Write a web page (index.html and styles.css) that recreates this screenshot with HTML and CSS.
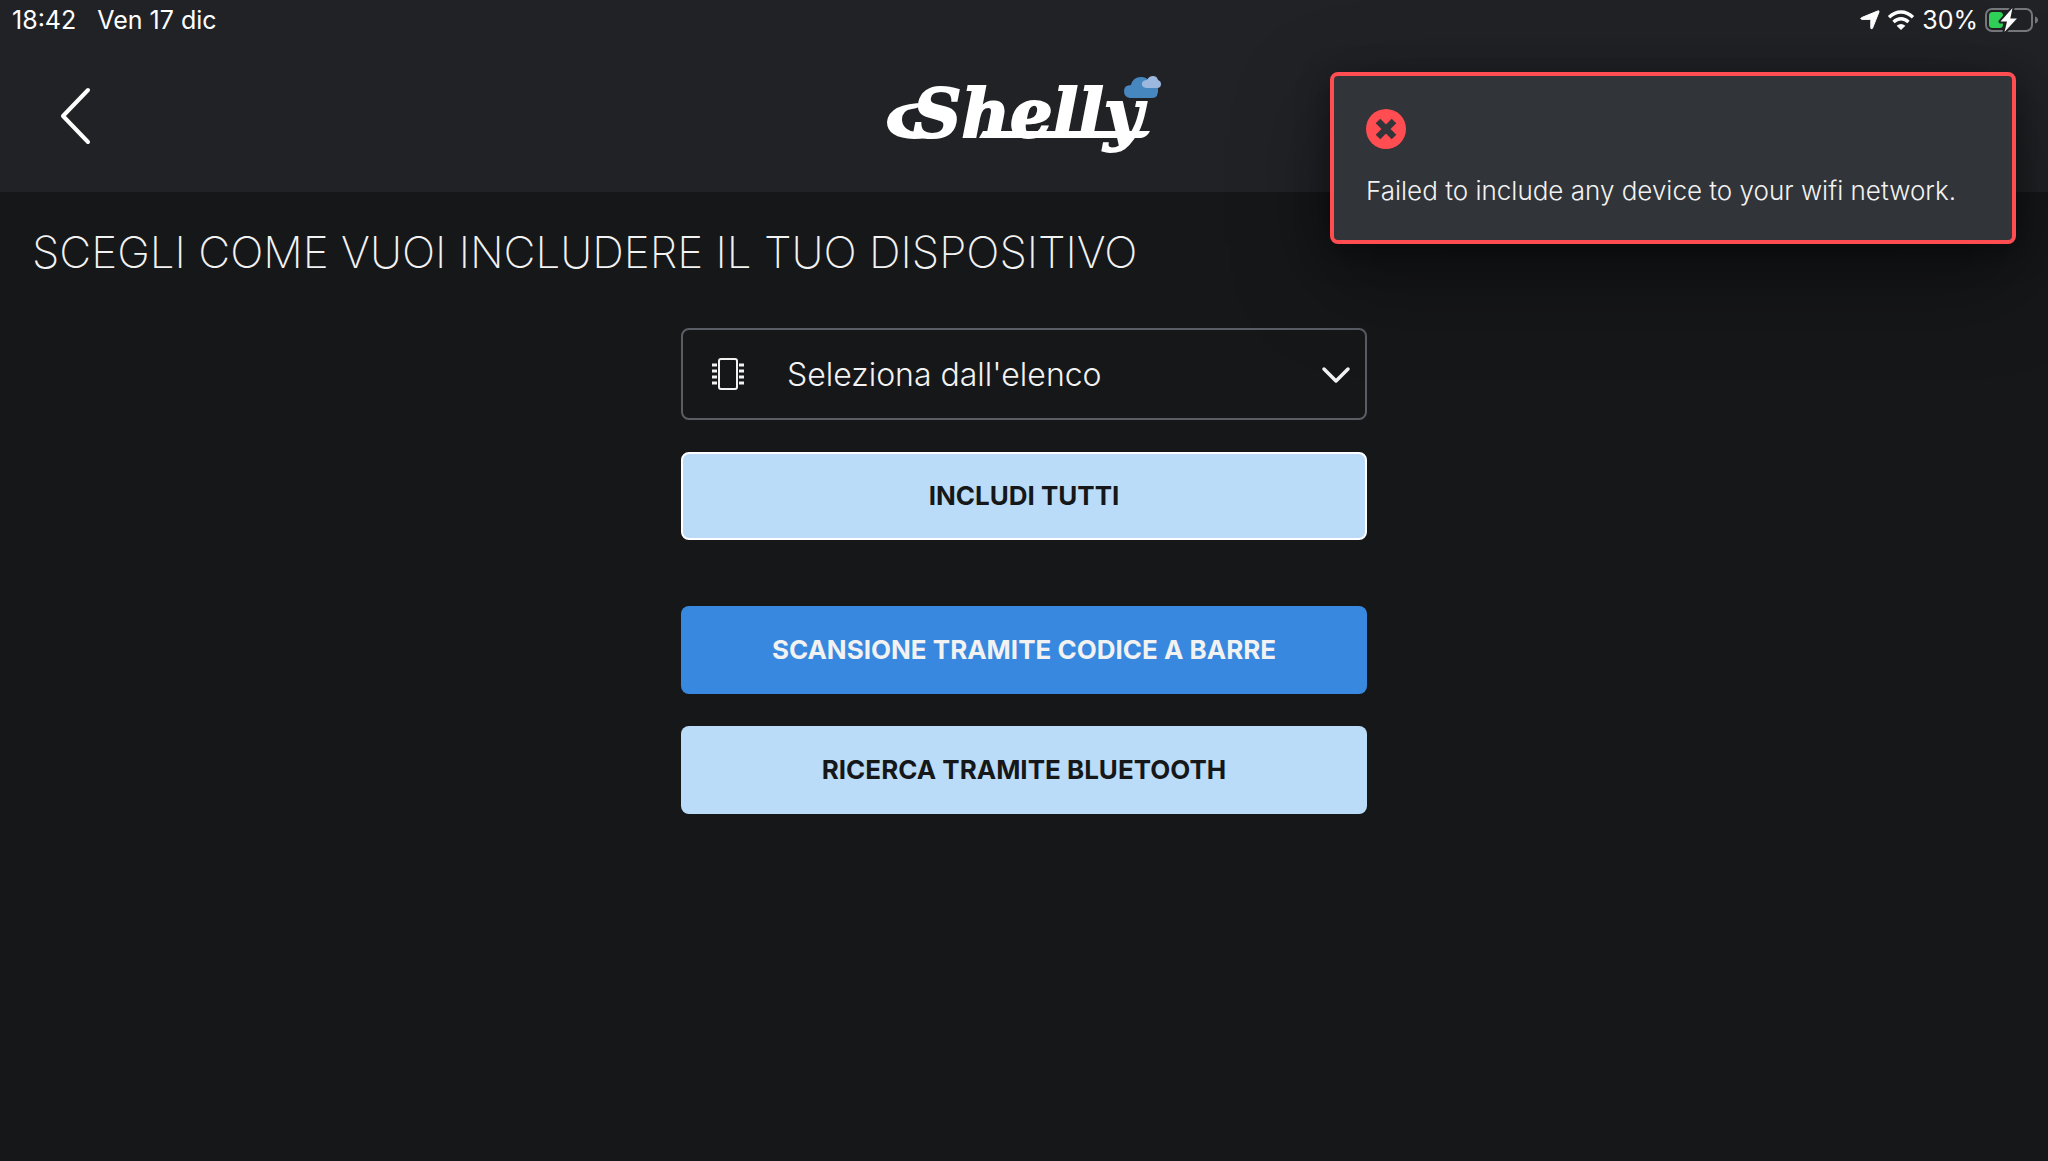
FILE: index.html
```html
<!DOCTYPE html>
<html lang="it">
<head>
  <meta charset="UTF-8" />
  <meta name="viewport" content="width=device-width, initial-scale=1.0"/>
  <title>Shelly Cloud</title>
  <link rel="stylesheet" href="styles.css">
</head>
<body>
  <header class="header">
    <div class="status-bar">
      <div class="status-group">
        <span>18:42</span>
        <span>Ven 17 dic</span>
      </div>
      <div class="status-icons">
        <svg width="20" height="20" viewBox="0 0 20 20" fill="#fff" aria-hidden="true">
          <path d="M17.6 1Q19.6 .2 18.9 2.2L12.6 18Q11.4 20.2 10.8 18V10.4Q10.8 9.4 9.8 9.4H2Q-.4 8.7 1.6 7.6Z" stroke="#fff" stroke-width="1"/>
        </svg>
        <svg width="28" height="22" viewBox="0 0 28 22" aria-hidden="true">
          <path d="M2 8.2Q7.5 3 14 3T26 8.2M6.5 13Q10 9.8 14 9.8T21.5 13" fill="none" stroke="#fff" stroke-width="3.4"/>
          <path d="M9.6 16.7Q14 13.2 18.4 16.7L14 21Z" fill="#fff"/>
        </svg>
        <span>30%</span>
        <svg width="54" height="26" viewBox="0 0 54 26" aria-hidden="true">
          <rect x="1" y="2" width="46" height="22" rx="6" fill="none" stroke="#77787b" stroke-width="2"/>
          <path d="M50 9.5Q53 10.5 53 13T50 16.5Z" fill="#77787b"/>
          <rect x="4" y="5" width="14" height="16" rx="3.5" fill="#30d158"/>
          <path d="M27.5 1L15.5 14.5H22L19.5 25L32 11.5H25.3Z" fill="#fff" stroke="#212226" stroke-width="4" paint-order="stroke" stroke-linejoin="round"/>
        </svg>
      </div>
    </div>
    <nav class="nav">
      <button class="back" aria-label="Indietro">
        <svg width="32" height="60" viewBox="0 0 32 60" aria-hidden="true">
          <path d="M29 4L4 30L29 56" fill="none" stroke="#fff" stroke-width="4" stroke-linecap="round" stroke-linejoin="round"/>
        </svg>
      </button>
      <svg class="logo" width="274" height="80" viewBox="0 0 274 80" role="img" aria-label="Shelly">
        <text class="wordmark" x="26" y="61">Shelly</text>
        <!-- swash and underline -->
        <path d="M38 27Q33 32 25 33Q15 34 15 44Q16 55 30 56L48 59Q40 63 27 63Q0 62 0 46Q2 27 38 27Z" fill="#fff"/>
        <path d="M96 55H263Q260 61 254 62H92Z" fill="#fff"/>
        <path d="M243 22Q237 21 237 15Q237 9 244 9Q246 1 254 1Q260 1 263 6L271 12Q272 22 265 22Z" fill="#4687c0"/>
        <path d="M259 12Q254 11 255 7Q256 4 260 4Q262 0 266 0Q270 0 271 4Q274 5 274 8Q274 12 270 12Z" fill="#9db8df"/>
      </svg>
    </nav>
  </header>

  <div class="toast" role="alert">
    <svg width="40" height="40" viewBox="0 0 40 40" aria-hidden="true">
      <circle cx="20" cy="20" r="20" fill="#ff4d52"/>
      <path d="M12 12L28 28M28 12L12 28" stroke="#313439" stroke-width="6.5"/>
    </svg>
    <p>Failed to include any device to your wifi network.</p>
  </div>

  <main class="main">
    <h1>SCEGLI COME VUOI INCLUDERE IL TUO DISPOSITIVO</h1>
    <div class="options">
      <div class="group">
        <div class="select-box">
          <label for="device" class="chip" aria-label="Dispositivo">
            <svg width="32" height="34" viewBox="0 0 32 34" fill="none" stroke="#f2f2f2" aria-hidden="true">
              <rect x="7" y="2" width="18" height="30" rx="2" stroke-width="2"/>
              <path d="M0 8H5M0 14H5M0 20H5M0 26H5M27 8H32M27 14H32M27 20H32M27 26H32" stroke-width="3"/>
            </svg>
          </label>
          <select id="device">
            <option>Seleziona dall'elenco</option>
          </select>
          <svg class="arrow" width="30" height="20" viewBox="0 0 30 20" aria-hidden="true">
            <path d="M3 5L15 17L27 5" fill="none" stroke="#f2f2f2" stroke-width="3.5" stroke-linecap="round" stroke-linejoin="round"/>
          </svg>
        </div>
        <button class="btn btn-light btn-outline">INCLUDI TUTTI</button>
      </div>
      <div class="group">
        <button class="btn btn-blue">SCANSIONE TRAMITE CODICE A BARRE</button>
        <button class="btn btn-light">RICERCA TRAMITE BLUETOOTH</button>
      </div>
    </div>
  </main>
</body>
</html>
```

FILE: styles.css
```css
* {
  box-sizing: border-box;
}

body {
  margin: 0;
  min-height: 100vh;
  background: #161719;
  color: #f2f2f2;
  font-family: Inter, sans-serif;
}

svg {
  display: block;
}

.header {
  background: #212226;
}

.status-bar {
  display: flex;
  justify-content: space-between;
  align-items: center;
  height: 40px;
  padding: 0 9px 0 12px;
  color: #fff;
  font-size: 25px;
  font-weight: 400;
}

.status-group {
  display: flex;
  gap: 21px;
}

.status-icons {
  display: flex;
  align-items: center;
  gap: 7px;
}

.nav {
  display: grid;
  grid-template-columns: 1fr auto 1fr;
  align-items: center;
  height: 152px;
  padding: 0 32px;
}

.back {
  justify-self: start;
  padding: 16px 27px;
  border: none;
  background: none;
  cursor: pointer;
}

.logo {
  overflow: visible;
}

.wordmark {
  font-family: "DejaVu Serif", serif;
  font-size: 67px;
  font-weight: bold;
  font-style: italic;
  fill: #fff;
  stroke: #fff;
  stroke-width: 2px;
}

.toast {
  position: absolute;
  top: 72px;
  right: 32px;
  width: 686px;
  max-width: calc(100% - 64px);
  padding: 33px 32px;
  border: 4px solid #ff4d52;
  border-radius: 8px;
  background: #313439;
  box-shadow: 0 32px 96px rgba(0, 0, 0, 0.4), 0 8px 32px rgba(0, 0, 0, 0.4);
}

.toast p {
  margin: 25px 0 0;
  font-size: 26px;
  font-weight: 300;
  line-height: 33px;
}

.main {
  padding: 32px;
}

h1 {
  margin: 0 0 48px;
  font-size: 44px;
  font-weight: 200;
  line-height: 56px;
}

.options {
  display: flex;
  flex-direction: column;
  gap: 66px;
  max-width: 686px;
  margin: 0 auto;
}

.group {
  display: flex;
  flex-direction: column;
  gap: 32px;
}

.select-box {
  display: grid;
  grid-template-columns: 90px 1fr 58px;
  align-items: center;
  border: 2px solid #5a5d64;
  border-radius: 8px;
}

.chip {
  grid-area: 1 / 1;
  justify-self: center;
}

.arrow {
  grid-area: 1 / 3;
  justify-self: center;
  pointer-events: none;
}

/* the select fills the whole box, icons sit in its padding */
.select-box select {
  grid-area: 1 / 1 / 2 / 4;
  appearance: none;
  width: 100%;
  height: 88px;
  padding: 0 60px 0 104px;
  border: none;
  background: none;
  color: #f2f2f2;
  font-family: inherit;
  font-size: 32px;
  font-weight: 300;
}

.btn {
  height: 88px;
  padding: 0 16px 2px;
  border: none;
  border-radius: 8px;
  font-family: inherit;
  font-size: 26px;
  font-weight: 700;
  cursor: pointer;
}

.btn-light {
  background: #badcf8;
  color: #161719;
}

.btn-outline {
  border: 2px solid #fff;
}

.btn-blue {
  background: #3888df;
  color: #f2f2f2;
}
```
